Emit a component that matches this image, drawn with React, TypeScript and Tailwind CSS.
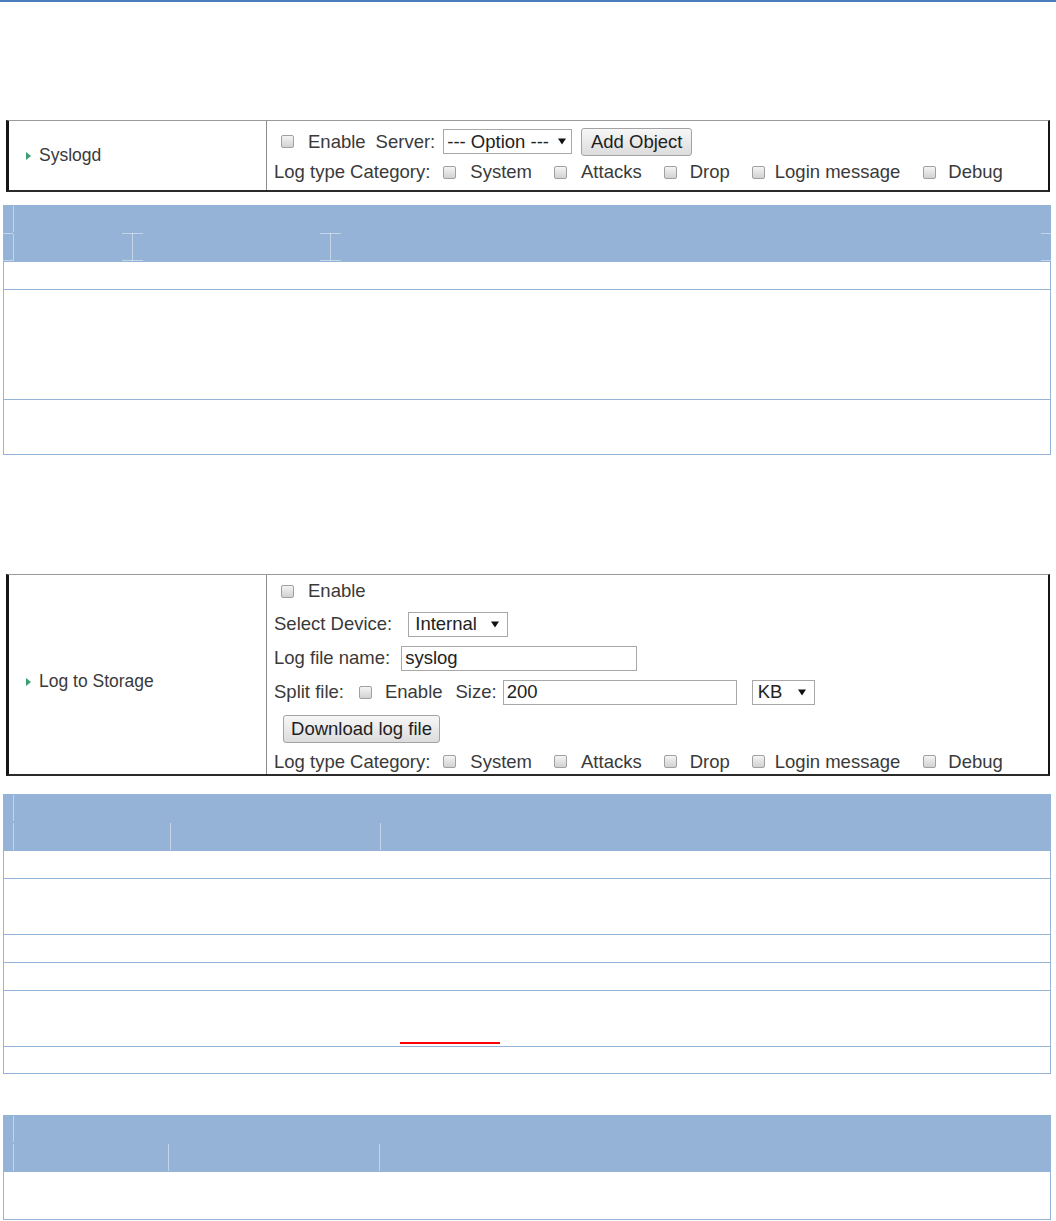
import React from 'react';

// Small pieces of the embedded router screenshots
function Check({ className = '' }: { className?: string }) {
  return (
    <span
      className={`inline-block h-[13px] w-[13px] shrink-0 rounded-[2px] border border-[#a0a0a0] bg-gradient-to-b from-[#f4f4f4] to-[#d2d2d2] ${className}`}
    />
  );
}

function Arrow() {
  return (
    <svg width="8" height="7" viewBox="0 0 8 7" className="shrink-0">
      <path d="M0 0.5H8L4 6.5Z" fill="#111" />
    </svg>
  );
}

function Triangle() {
  return (
    <svg width="5" height="8" viewBox="0 0 5 8" className="shrink-0">
      <path d="M0 0L5 4L0 8Z" fill="#3aa071" />
    </svg>
  );
}

function Category() {
  return (
    <div className="flex items-center">
      <span>Log type Category:</span>
      <Check className="ml-[13px]" />
      <span className="ml-[14px]">System</span>
      <Check className="ml-[22px]" />
      <span className="ml-[14px]">Attacks</span>
      <Check className="ml-[22px]" />
      <span className="ml-[13px]">Drop</span>
      <Check className="ml-[22px]" />
      <span className="ml-[10px]">Login message</span>
      <Check className="ml-[23px]" />
      <span className="ml-[12px]">Debug</span>
    </div>
  );
}

function ShotBox({ label, children, className, labelPad = '' }: { label: string; children: React.ReactNode; className: string; labelPad?: string }) {
  return (
    <div
      className={`ml-[6px] flex w-[1044px] border-t border-l-[3px] border-r-[2px] border-b-[2px] border-t-[#9a9a9a] border-l-[#151515] border-r-[#151515] border-b-[#2a2a2a] bg-white font-['Liberation_Sans',Arial,sans-serif] text-[18.5px] text-[#3a3a3a] ${className}`}
    >
      <div className={`flex w-[258px] shrink-0 items-center gap-[8px] border-r border-r-[#8c8c8c] pl-[17px] text-[17.5px] ${labelPad}`}>
        <Triangle />
        <span>{label}</span>
      </div>
      <div className="flex flex-1 flex-col pl-[7px]">{children}</div>
    </div>
  );
}

const line = 'absolute w-px bg-white/45';
const tick = 'absolute h-px bg-white/45';

export default function App() {
  return (
    <div className="flex min-h-[1221px] w-full flex-col bg-white">
      <div className="h-[2px] w-full bg-[#4a7ebb]" />

      {/* Syslogd screenshot */}
      <ShotBox label="Syslogd" className="mt-[118px] h-[72px]">
        <div className="mt-[4px] flex h-[33px] items-center">
          <Check className="ml-[7px]" />
          <span className="ml-[14px]">Enable</span>
          <span className="ml-[10px]">Server:</span>
          <span className="ml-[8px] flex h-[25px] w-[129px] items-center justify-between border border-[#a8a8a8] bg-white pl-[3px] pr-[5px] text-[#222]">
            --- Option ---
            <Arrow />
          </span>
          <span className="ml-[9px] flex h-[28px] w-[111px] items-center justify-center rounded-[3px] border border-[#a3a3a3] bg-gradient-to-b from-[#f7f7f7] to-[#dcdcdc] text-[#1e1e1e]">
            Add Object
          </span>
        </div>
        <div className="flex h-[28px] items-center">
          <Category />
        </div>
      </ShotBox>

      {/* table 1 */}
      <div className="ml-[3px] mt-[13px] flex w-[1048px] flex-col border-x border-b border-[#95b3d7]">
        <div className="relative -mx-px h-[57px] bg-[#95b3d7]">
          <div className={`${line} left-[10px] top-[1px] h-[26px]`} />
          <div className={`${line} left-[10px] top-[29px] h-[27px]`} />
          <div className={`${tick} left-0 top-[28px] w-[10px]`} />
          <div className={`${tick} left-0 top-[55px] w-[10px]`} />
          <div className={`${line} left-[129px] top-[28px] h-[28px]`} />
          <div className={`${tick} left-[119px] top-[28px] w-[21px]`} />
          <div className={`${tick} left-[119px] top-[55px] w-[21px]`} />
          <div className={`${line} left-[327px] top-[28px] h-[28px]`} />
          <div className={`${tick} left-[317px] top-[28px] w-[21px]`} />
          <div className={`${tick} left-[317px] top-[55px] w-[21px]`} />
          <div className={`${tick} left-[1038px] top-[28px] w-[10px]`} />
          <div className={`${tick} left-[1038px] top-[55px] w-[10px]`} />
        </div>
        <div className="h-[27px]" />
        <div className="h-[110px] border-t border-[#95b3d7]" />
        <div className="h-[55px] border-t border-[#95b3d7]" />
      </div>

      {/* Log to Storage screenshot */}
      <ShotBox label="Log to Storage" className="mt-[119px] h-[202px]" labelPad="pt-[14px]">
        <div className="flex h-[32px] items-center">
          <Check className="ml-[7px]" />
          <span className="ml-[14px]">Enable</span>
        </div>
        <div className="flex h-[34px] items-center">
          <span>Select Device:</span>
          <span className="ml-[16px] flex h-[25px] w-[100px] items-center justify-between border border-[#a8a8a8] bg-white pl-[6px] pr-[8px] text-[#222]">
            Internal
            <Arrow />
          </span>
        </div>
        <div className="flex h-[34px] items-center">
          <span>Log file name:</span>
          <span className="ml-[11px] flex h-[25px] w-[236px] items-center border border-[#a8a8a8] bg-white pl-[3px] text-[#222]">
            syslog
          </span>
        </div>
        <div className="flex h-[34px] items-center">
          <span>Split file:</span>
          <Check className="ml-[15px]" />
          <span className="ml-[13px]">Enable</span>
          <span className="ml-[13px]">Size:</span>
          <span className="ml-[6px] flex h-[25px] w-[234px] items-center border border-[#a8a8a8] bg-white pl-[3px] text-[#222]">
            200
          </span>
          <span className="ml-[15px] flex h-[25px] w-[63px] items-center justify-between border border-[#a8a8a8] bg-white pl-[5px] pr-[8px] text-[#222]">
            KB
            <Arrow />
          </span>
        </div>
        <div className="flex h-[40px] items-center">
          <span className="ml-[9px] flex h-[28px] w-[157px] items-center justify-center rounded-[3px] border border-[#a3a3a3] bg-gradient-to-b from-[#f7f7f7] to-[#dcdcdc] text-[#1e1e1e]">
            Download log file
          </span>
        </div>
        <div className="flex h-[25px] items-center">
          <Category />
        </div>
      </ShotBox>

      {/* table 2 */}
      <div className="ml-[3px] mt-[18px] flex w-[1048px] flex-col border-x border-b border-[#95b3d7]">
        <div className="relative -mx-px h-[57px] bg-[#95b3d7]">
          <div className={`${line} left-[10px] top-[1px] h-[26px]`} />
          <div className={`${line} left-[10px] top-[29px] h-[27px]`} />
          <div className={`${line} left-[167px] top-[29px] h-[27px]`} />
          <div className={`${line} left-[377px] top-[29px] h-[27px]`} />
        </div>
        <div className="h-[27px]" />
        <div className="h-[56px] border-t border-[#95b3d7]" />
        <div className="h-[28px] border-t border-[#95b3d7]" />
        <div className="h-[28px] border-t border-[#95b3d7]" />
        <div className="flex h-[56px] items-end border-t border-[#95b3d7]">
          <div className="mb-[2px] ml-[396px] h-[2px] w-[100px] bg-[#ff0000]" />
        </div>
        <div className="h-[27px] border-t border-[#95b3d7]" />
      </div>

      {/* table 3 */}
      <div className="ml-[3px] mt-[41px] flex w-[1048px] flex-col border-x border-b border-[#95b3d7]">
        <div className="relative -mx-px h-[57px] bg-[#95b3d7]">
          <div className={`${line} left-[10px] top-[1px] h-[26px]`} />
          <div className={`${line} left-[10px] top-[29px] h-[27px]`} />
          <div className={`${line} left-[165px] top-[29px] h-[27px]`} />
          <div className={`${line} left-[376px] top-[29px] h-[27px]`} />
        </div>
        <div className="h-[47px]" />
      </div>
    </div>
  );
}
